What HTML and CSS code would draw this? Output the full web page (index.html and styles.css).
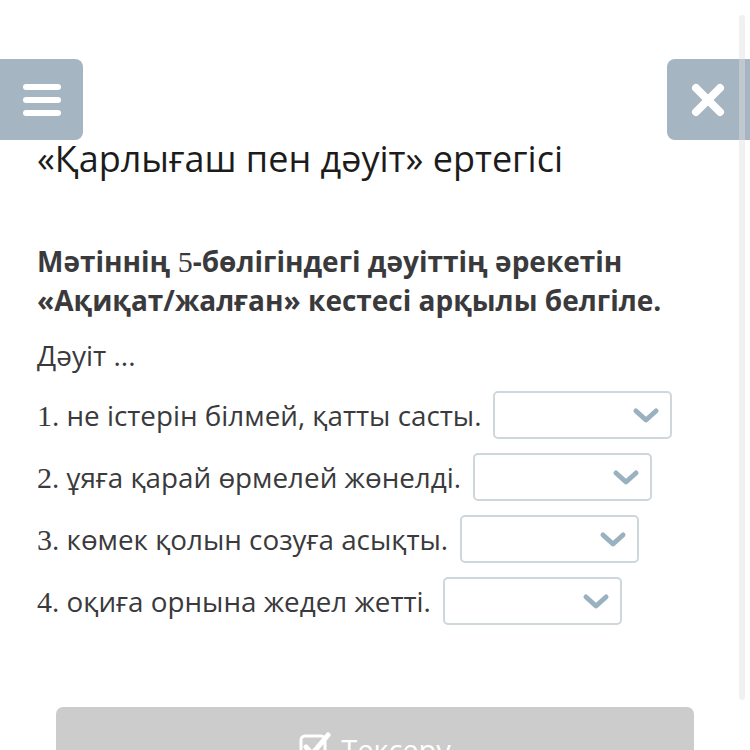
FILE: index.html
```html
<!DOCTYPE html>
<html lang="kk">
<head>
<meta charset="utf-8">
<link rel="stylesheet" href="styles.css">
</head>
<body>
<div class="page">
  <div class="topbar">
    <button class="tb-btn menu" aria-label="menu">
      <svg width="40" height="36" viewBox="0 0 40 36"><g stroke="#fff" stroke-width="6" stroke-linecap="round"><line x1="4" y1="5" x2="36" y2="5"/><line x1="4" y1="18" x2="36" y2="18"/><line x1="4" y1="31" x2="36" y2="31"/></g></svg>
    </button>
    <button class="tb-btn close" aria-label="close">
      <svg width="34" height="34" viewBox="0 0 34 34"><g stroke="#fff" stroke-width="8" stroke-linecap="round"><line x1="5" y1="5" x2="29" y2="29"/><line x1="29" y1="5" x2="5" y2="29"/></g></svg>
    </button>
  </div>
  <div class="content">
    <h1 class="title">«Қарлығаш пен дәуіт» ертегісі</h1>
    <p class="question">Мәтіннің <span class="num">5</span>-бөлігіндегі дәуіттің әрекетін «Ақиқат/жалған» кестесі арқылы белгіле.</p>
    <p class="lead">Дәуіт ...</p>
    <div class="items">
      <div class="item"><span class="txt"><span class="num">1</span>. не істерін білмей, қатты састы.</span><span class="select"><svg class="chev" width="28" height="18" viewBox="0 0 28 18"><polyline points="4,4 14,13 24,4" fill="none" stroke="#9ab2bf" stroke-width="5" stroke-linecap="round" stroke-linejoin="round"/></svg></span></div>
      <div class="item"><span class="txt"><span class="num">2</span>. ұяға қарай өрмелей жөнелді.</span><span class="select"><svg class="chev" width="28" height="18" viewBox="0 0 28 18"><polyline points="4,4 14,13 24,4" fill="none" stroke="#9ab2bf" stroke-width="5" stroke-linecap="round" stroke-linejoin="round"/></svg></span></div>
      <div class="item"><span class="txt"><span class="num">3</span>. көмек қолын созуға асықты.</span><span class="select"><svg class="chev" width="28" height="18" viewBox="0 0 28 18"><polyline points="4,4 14,13 24,4" fill="none" stroke="#9ab2bf" stroke-width="5" stroke-linecap="round" stroke-linejoin="round"/></svg></span></div>
      <div class="item"><span class="txt"><span class="num">4</span>. оқиға орнына жедел жетті.</span><span class="select"><svg class="chev" width="28" height="18" viewBox="0 0 28 18"><polyline points="4,4 14,13 24,4" fill="none" stroke="#9ab2bf" stroke-width="5" stroke-linecap="round" stroke-linejoin="round"/></svg></span></div>
    </div>
    <div class="check">
      <svg width="32" height="30" viewBox="0 0 32 30"><rect x="2" y="4" width="24" height="24" rx="4" fill="none" stroke="#fff" stroke-width="3"/><polyline points="7,15 13,22 29,3" fill="none" stroke="#fff" stroke-width="5" stroke-linecap="round" stroke-linejoin="round"/></svg>
      <span>Тексеру</span>
    </div>
  </div>
  <div class="scrollbar"></div>
</div>
</body>
</html>
```
FILE: styles.css
```css
html, body {
  margin: 0;
  padding: 0;
  background: #fff;
}
body {
  font-family: "Open Sans", "Noto Sans", sans-serif;
  width: 750px;
  height: 750px;
  overflow: hidden;
}
.page {
  position: relative;
  width: 750px;
  height: 750px;
}
.topbar {
  display: flex;
  justify-content: space-between;
  padding-top: 59px;
}
.tb-btn {
  width: 83px;
  height: 81px;
  border: none;
  background: #a5b5c2;
  display: flex;
  align-items: center;
  justify-content: center;
  padding: 0;
}
.menu {
  border-radius: 0 8px 8px 0;
}
.close {
  border-radius: 8px 0 0 8px;
  padding-right: 2px;
}
.content {
  padding: 0 0 0 37px;
}
.title {
  margin: 0;
  font-weight: 400;
  font-size: 36px;
  line-height: 42px;
  color: #1c1c1c;
  margin-top: -2px;
}
.question {
  margin: 62px 0 0 0;
  width: 680px;
  font-weight: 700;
  font-size: 28px;
  line-height: 39px;
  color: #3a3a3c;
}
.num {
  font-family: "Liberation Serif", "DejaVu Serif", serif;
  font-weight: 400;
  font-size: 30px;
  line-height: 1;
}
.lead {
  margin: 16px 0 0 0;
  font-size: 28px;
  line-height: 38px;
  color: #3a3a3c;
}
.items {
  display: flex;
  flex-direction: column;
  gap: 14px;
  margin-top: 17px;
}
.item {
  display: flex;
  align-items: center;
  gap: 12px;
  font-size: 27.8px;
  color: #3a3a3c;
}
.select {
  border: 2px solid #cdd7dc;
  border-radius: 5px;
  display: flex;
  align-items: center;
  justify-content: flex-end;
  padding-right: 10px;
  box-sizing: border-box;
  width: 179px;
  height: 48px;
}
.chev {
  margin-top: 2px;
}
.check {
  margin-top: 82px;
  width: 638px;
  margin-left: 19px;
  height: 70px;
  background: #cccccc;
  border-radius: 7px;
  display: flex;
  align-items: flex-start;
  justify-content: center;
  gap: 10px;
  color: #fff;
  font-size: 29px;
  line-height: 1;
  padding-top: 25px;
  box-sizing: border-box;
}
.check span {
  margin-top: 3px;
}
.scrollbar {
  position: absolute;
  right: 5px;
  top: 15px;
  width: 6px;
  height: 685px;
  background: rgba(225, 225, 225, 0.45);
  border-radius: 3px;
}
```
